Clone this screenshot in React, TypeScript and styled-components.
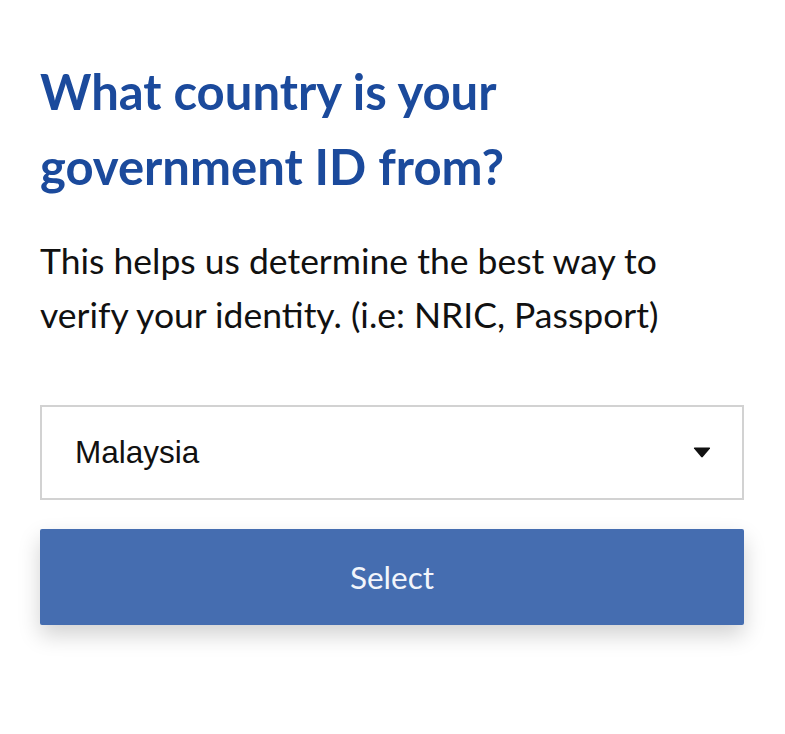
import styled, { createGlobalStyle } from "styled-components";

const GlobalStyle = createGlobalStyle`
    body {
        margin: 0;
        background: #ffffff;
        font-family: 'Lato', sans-serif;
    }
`;

function App() {
    return (
        <>
            <GlobalStyle />
            <Page>
                <Title>What country is your government ID from?</Title>
                <Description>
                    This helps us determine the best way to verify your identity. (i.e: NRIC, Passport)
                </Description>
                <Form>
                    <SelectBox>
                        <SelectValue>Malaysia</SelectValue>
                        <Caret viewBox="0 0 18 11" aria-hidden="true">
                            <path d="M1 1.5 Q0.5 0.5 1.8 0.5 H16.2 Q17.5 0.5 17 1.5 L9.8 10 Q9 10.8 8.2 10 Z" />
                        </Caret>
                    </SelectBox>
                    <SubmitButton type="button">Select</SubmitButton>
                </Form>
            </Page>
        </>
    );
}

// STYLING
const Page = styled.main`
    display: flex;
    flex-direction: column;
    padding: 54px 41px 60px 40px;
`;

const Title = styled.h1`
    font-family: 'Lato', sans-serif;
    font-weight: 700;
    font-size: 49px;
    line-height: 75px;
    color: #1b4a9c;
    margin: 0;
    max-width: 500px;
`;

const Description = styled.p`
    font-family: 'Lato', sans-serif;
    font-size: 35.5px;
    line-height: 54px;
    color: #111111;
    margin: 30px 0 0;
    max-width: 680px;
`;

const Form = styled.div`
    display: flex;
    flex-direction: column;
    gap: 29px;
    margin-top: 63px;
`;

const SelectBox = styled.div`
    display: flex;
    align-items: center;
    justify-content: space-between;
    height: 95px;
    box-sizing: border-box;
    border: 2px solid #d2d2d2;
    padding: 0 31px 0 33px;
    background: #ffffff;
`;

const SelectValue = styled.span`
    font-family: 'Liberation Sans', Arial, sans-serif;
    font-size: 31.5px;
    color: #111111;
`;

const Caret = styled.svg`
    width: 18px;
    height: 11px;
    fill: #111111;
`;

const SubmitButton = styled.button`
    height: 96px;
    border: none;
    border-radius: 2px;
    background: #456db0;
    color: #f2f5fb;
    font-family: 'Lato', sans-serif;
    font-size: 31.5px;
    box-shadow: 0 10px 22px rgba(0, 0, 0, 0.18);
    cursor: pointer;
`;

export default App;
